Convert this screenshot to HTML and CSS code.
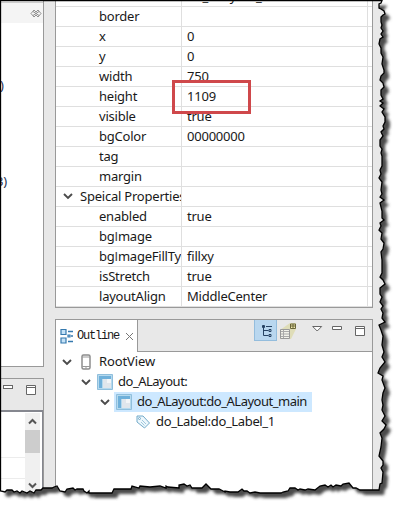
FILE: index.html
```
<!DOCTYPE html>
<html lang="en">
<head>
<meta charset="utf-8">
<title>Properties and Outline</title>
<link rel="stylesheet" href="styles.css">
</head>
<body>
<svg class="sheet" width="401" height="509">
  <defs>
    <clipPath id="torn"><path id="edge" d="M0.5 0.5H382L381 3L379 4V8L381 9L384 11L385 14L383 15L381 17V22L382 25L381 28L383 31L381 34L383 37L380 39L379 44L381 48V53L383 57L382 64L384 70L384 73L381 76L380 80L383 83L384 87L381 90V95L383 99L380 101L383 103L380 106L384 109L382 112L385 117L385 122L383 126L384 129L381 132L383 136L380 140V146L382 149L381 153L382 156V166L380 170L381 174L379 178L382 182L381 190L382 194L380 197L384 200L380 203L382 211V218L384 220L380 223L381 226L379 230L382 233L381 239L384 243L383 249L381 252L382 260V273L380 277L383 280L385 284L380 288V294L382 297L380 302L383 306L381 309L383 313L382 318L385 322L379 325L381 330L383 336L382 345L384 352L382 357L385 362L380 368L378 373L383 376L382 380L385 388L383 393L382 400L383 405L382 410L385 416L382 421L386 425L384 429L380 433L382 438L381 447L379 456L383 461V465L381 468L383 472L382 483L380 484L379 490H370L360 490L356 488H353L349 483L343 484L341 486L336 485L333 487L331 485L328 487L325 485L320 486L315 490L308 489L305 490L300 489L298 490L295 488H290L288 491L283 492L281 493L260 493L255 492L250 493L247 491H244L242 489L238 492H230L225 491V492L219 489H211L208 486L206 484L202 488H192L190 485L187 486L184 484L179 485V488L168 487L166 486V488L160 486L150 487L140 486L139 488L132 486L131 489H114L112 493H92L89 493V491L87 493L84 491L83 489H77L75 490L73 488L67 489L65 492L60 491L57 486L54 487L52 488L43 488L41 490H36L34 493L30 491L27 493L22 491L20 493L17 491L14 492L12 490H7L5 492L0.5 491Z"/></clipPath>
    <filter id="soft" x="-5%" y="-5%" width="110%" height="110%"><feGaussianBlur stdDeviation="1.5"/></filter>
  </defs>
  <use href="#edge" class="shadow" filter="url(#soft)"/>
</svg>
<div class="window">
  <div class="left">
    <section class="editor">
      <header><svg width="12" height="9" viewBox="0 0 12 9"><path d="M4 1L1 4.5L4 8M3 2.5L6 4.5L3 6.5M8 1L11 4.5L8 8M9 2.5L6 4.5L9 6.5M4 1L6 3L8 1M4 8L6 6L8 8"/></svg></header>
      <div class="code"><p>)</p><p>3)</p></div>
    </section>
    <section class="console">
      <header>
        <svg width="11" height="5"><rect x=".5" y=".5" width="9" height="3"/></svg>
        <svg width="11" height="11"><path d="M.5 .5h9v9h-9zM.5 2.5h9"/></svg>
      </header>
      <div class="list">
        <div class="lines"><i></i><i></i></div>
        <div class="scroll">
          <svg width="9" height="7"><path d="M1 5.5L4.5 2L8 5.5"/></svg>
          <b></b>
          <svg width="9" height="7"><path d="M1 1.5L4.5 5L8 1.5"/></svg>
        </div>
      </div>
    </section>
  </div>
  <main class="right">
    <section class="props">
      <div class="row first"><span></span><span>do_ALayout_main</span></div>
      <div class="row"><span>border</span><span></span></div>
      <div class="row"><span>x</span><span>0</span></div>
      <div class="row"><span>y</span><span>0</span></div>
      <div class="row"><span>width</span><span>750</span></div>
      <div class="row"><span>height</span><span>1109<em class="mark"></em></span></div>
      <div class="row"><span>visible</span><span>true</span></div>
      <div class="row"><span>bgColor</span><span>00000000</span></div>
      <div class="row"><span>tag</span><span></span></div>
      <div class="row"><span>margin</span><span></span></div>
      <div class="row group"><span><svg class="chev" width="10" height="7"><path d="M1 1L5 5L9 1"/></svg>Speical Properties</span><span></span></div>
      <div class="row"><span>enabled</span><span>true</span></div>
      <div class="row"><span>bg<u>I</u>mage</span><span></span></div>
      <div class="row"><span>bg<u>I</u>mageFillTy</span><span>fillxy</span></div>
      <div class="row"><span>isStretch</span><span>true</span></div>
      <div class="row"><span>layoutAlign</span><span>MiddleCenter</span></div>
    </section>
    <section class="outline">
      <header>
        <div class="tab">
          <svg width="14" height="16" viewBox="0 0 14 16"><g fill="#c5e2f7" stroke="#3579ae" stroke-width="1.2"><path d="M1 1.5h5v5H1zM1 10h5v5H1z"/><path d="M8 7h2v2H8z"/></g><path d="M8 3.5h5M11 8h2M8 13.5h5" stroke="#3579ae" stroke-width="1.3"/></svg>
          <span>Outline</span>
          <svg width="9" height="9"><path d="M1 1L8 8M8 1L1 8" stroke="#777"/></svg>
        </div>
        <div class="tools">
          <div class="active"><svg width="11" height="12" viewBox="0 0 11 12"><path d="M.5 1.5h2M1.5 2v8.5h5M1.5 5.5h5M4 1.5h6M7 4.5h2v2H7zM7 9.5h2v2H7zM.5 .5h2v2h-2z" fill="none" stroke="#264263"/></svg></div>
          <svg width="17" height="17" viewBox="0 0 17 17"><path d="M0 7L10 0H16V6L11 16H0Z" fill="#dfddb8"/><path d="M.5 6.5h9v9h-9z" fill="#f2f2ea" stroke="#999"/><path d="M1 8.5h8M1 11h8M1 13.5h8M3.5 7v8" stroke="#aaa"/><path d="M10.500 1h5v4.500h-5zM13 1v4.500M10.500 3h5" fill="#f3ecae" stroke="#69643a"/></svg>
          <svg width="11" height="7"><path d="M.7 .5h9L5.200 5z" fill="#fff" stroke="#666"/></svg>
          <svg width="11" height="5"><path d="M.5 .5h9v3h-9z" fill="#fff" stroke="#666"/></svg>
          <svg width="11" height="11"><path d="M.5 .5h9v9h-9zM.5 2.500h9" fill="#fff" stroke="#666"/></svg>
        </div>
      </header>
      <div class="tree">
        <div class="node l0"><svg class="chev" width="10" height="7"><path d="M1 1L5 5L9 1"/></svg><svg width="16" height="16"><rect x="4" y="1" width="8" height="14" rx="1.500" fill="#fff" stroke="#8c8c8c" stroke-width="1.500"/><path d="M4 3h8M4 12.500h8M7 14h2" stroke="#999"/></svg><span>RootView</span></div>
        <div class="node l1"><svg class="chev" width="10" height="7"><path d="M1 1L5 5L9 1"/></svg><svg width="16" height="16"><use href="#layout"/></svg><span>do_ALayout:</span></div>
        <div class="node l2"><svg class="chev" width="10" height="7"><path d="M1 1L5 5L9 1"/></svg><div class="picked"><svg width="16" height="16"><g id="layout"><path d="M.5 .5h15v15H.5z" fill="#b5d9ee" stroke="#90bfdc"/><path d="M2 2h12v3H2zM2 5h3v9H2z" fill="#6fb0da"/><path d="M6 5h8v9H6z" fill="#e0e6ec"/><path d="M10 5h4v4h-4z" fill="#f3f5f7"/></g></svg><span>do_ALayout:do_ALayout_main</span></div></div>
        <div class="node l3"><svg width="16" height="16"><path d="M2 2L8 2L14.500 9L9.500 14L2 8Z" fill="#edf7fc" stroke="#72aac9" stroke-linejoin="round"/><circle cx="4.500" cy="4.500" r="1" fill="#fff" stroke="#72aac9"/><path d="M7 6L11 10M6 8L9.500 11.500" stroke="#8bbbd4" stroke-width=".8"/></svg><span>do_Label:do_Label_1</span></div>
      </div>
    </section>
  </main>
</div>
<svg class="outline-edge" width="401" height="509"><use href="#edge"/></svg>
</body>
</html>
```

FILE: styles.css
```
* { box-sizing: border-box; }
body { margin: 0; width: 401px; height: 509px; overflow: hidden; position: relative; background: #fff; font: 13px/19px "Noto Sans", "Open Sans", sans-serif; letter-spacing: -.22px; color: #191919; }
svg { display: block; flex: none; fill: none; }
.sheet, .outline-edge { position: absolute; left: 0; top: 0; }
.shadow { fill: #4c4c4c; transform: translate(5px, 5px); }
.outline-edge { fill: none; stroke: #000; stroke-width: 1.3; pointer-events: none; }
.window { position: relative; display: flex; gap: 11px; width: 401px; height: 509px; background: #e8e8e8; clip-path: url(#torn); }
.left { width: 44px; height: 509px; display: flex; flex-direction: column; gap: 11px; }
.editor { height: 367px; border: solid #999; border-width: 0 1px 1px 0; background: #fff; padding-top: 2px; }
.editor header { height: 21px; background: #f4f4f4; border-top: 1px solid #ccc; padding: 6px 0 0 30px; }
.editor header svg { stroke: #777; stroke-width: .8; }
.code p { margin: 0; height: 19px; }
.code { padding-top: 53px; color: #253052; }
.code p + p { margin-top: 77px; margin-left: -4px; }
.console { flex: 1; border: solid #999; border-width: 1px 1px 0 0; display: flex; flex-direction: column; }
.console header { height: 31px; flex: none; display: flex; gap: 12px; padding: 6px 0 0 3px; }
.console header svg { fill: #fff; stroke: #666; }
.list { flex: 1; display: flex; background: #fff; border: solid #85878f; border-width: 2px 1px 0 0; }
.lines { width: 25px; padding-top: 45px; }
.lines i { display: block; height: 21px; border-top: 1px solid #ececec; }
.scroll { width: 15px; margin-top: 1px; background: #f0f0f0; display: flex; flex-direction: column; align-items: center; padding-top: 5px; }
.scroll svg { stroke: #555; stroke-width: 2; }
.scroll b { width: 15px; height: 23px; background: #cdcdcd; margin: 5px 0 29px; flex: none; }
.right { width: 318px; height: 509px; }
.props { height: 308px; border: 1px solid #999; border-top: 0; background: #fff; overflow: hidden; }
.row { height: 20px; display: grid; grid-template-columns: 126px 186px; border-bottom: 1px solid #dfdfdf; }
.row.first { margin-top: -13px; }
.row span { border-right: 1px solid #dfdfdf; padding-left: 5px; white-space: nowrap; height: 19px; overflow: hidden; }
.row span:first-child { padding-left: 43px; }
.row span:last-child { position: relative; overflow: visible; }
.row.group span:first-child { padding-left: 7px; display: flex; align-items: center; gap: 7px; }
u { text-decoration: none; font-family: "DejaVu Sans"; font-size: 12px; color: #444; }
.chev { stroke: #4b4b4b; stroke-width: 1.9; }
.mark { position: absolute; left: -10px; top: -7px; width: 79px; height: 34px; border: 3px solid #cf484b; z-index: 1; }
.outline { margin-top: 11px; height: 190px; border: 1px solid #999; border-bottom: 0; background: #fff; }
.outline header { height: 32px; display: flex; background: #e8e8e8; }
.tab { width: 82px; background: #fff; border-right: 1px solid #999; display: flex; align-items: center; padding-left: 4px; font: 12px/16px "Liberation Mono", monospace; }
.tab span { width: 42px; margin: 0 6px 0 3px; letter-spacing: -1.2px; white-space: nowrap; }
.tools { flex: 1; display: flex; padding-left: 116px; border-bottom: 1px solid #999; }
.tools > svg:nth-child(2) { margin: 3px 0 0 3px; }
.tools > svg:nth-child(3) { margin: 6px 0 0 15px; }
.tools > svg:nth-child(4) { margin: 6px 0 0 9px; }
.tools > svg:nth-child(5) { margin: 6px 0 0 12px; }
.active { width: 23px; height: 21px; background: #b9d7ef; border: 1px solid #94bddd; border-top: 0; padding: 5px 0 0 7px; }
.node { height: 20px; display: flex; align-items: center; white-space: nowrap; letter-spacing: -.49px; }
.node span { margin-top: -1px; }
.node > svg:not(.chev), .picked svg { margin-right: 5px; }
.node > .chev + svg { margin-left: 6px; }
.l0 { padding-left: 6px; letter-spacing: -.1px; }
.l1 { padding-left: 25px; }
.l2 { padding-left: 44px; }
.l3 { padding-left: 79px; letter-spacing: -.35px; }
.picked { display: flex; align-items: center; height: 20px; width: 198px; margin-left: 4px; padding-left: 2px; background: #cde8ff; }
```
